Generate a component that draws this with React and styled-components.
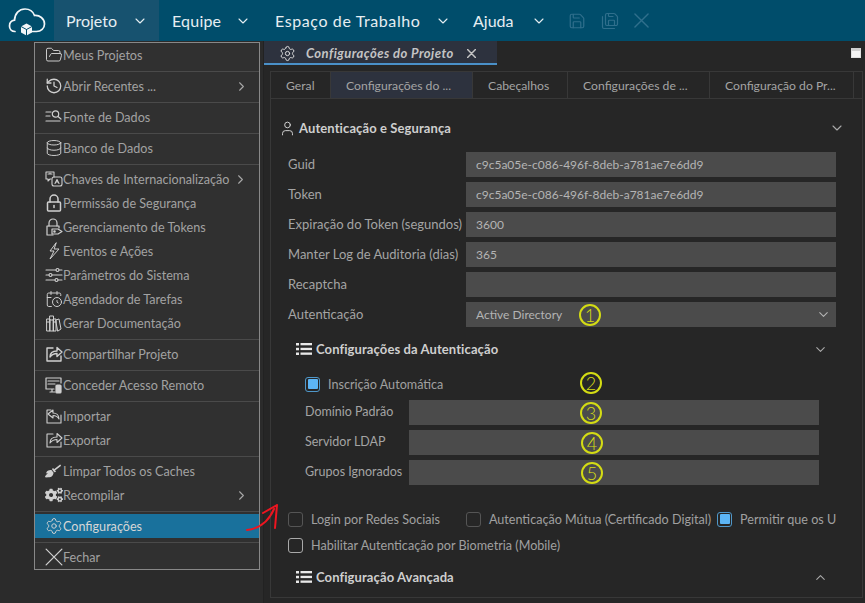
import React from "react";
import styled, { createGlobalStyle } from "styled-components";
import { ChevronDown, ChevronUp, ChevronRight, FolderOpen, History, Database, CalendarClock, Settings, Save, SaveAll, User } from "lucide-react";
import { FaCogs, FaBroom } from "react-icons/fa";

const Global = createGlobalStyle`
  html, body { margin: 0; padding: 0; background: #2b2b2b; }
  body { width: 865px; height: 603px; overflow: hidden; font-family: "Lato", "Noto Sans", sans-serif; color: #a8a8a8; }
  * { box-sizing: border-box; }
`;

const Page = styled.div`position: relative; width: 865px; height: 603px; display: flex; flex-direction: column; overflow: hidden;`;
const TopBar = styled.header`height: 41px; flex: none; background: #004d6b; display: flex; align-items: stretch; color: #e6eef2;`;
const Logo = styled.div`width: 54px; display: flex; align-items: center; justify-content: center;`;
const TopItem = styled.div`
  display: flex; align-items: center; justify-content: space-between; font-size: 16px; white-space: nowrap;
  width: ${p => p.$w}px; padding: 0 ${p => p.$pr}px 0 ${p => p.$pl}px; letter-spacing: ${p => p.$ls || 0}px;
  background: ${p => p.$active ? "#17526f" : "transparent"};
`;
const ToolIcons = styled.div`display: flex; align-items: center; gap: 15px; margin-left: 11px; color: #2f6f8c;`;

const Body = styled.div`flex: 1; display: flex; min-height: 0;`;
const LeftGutter = styled.div`width: 264px; flex: none; background: #2b2b2b; border-right: 1px solid #222;`;
const Main = styled.main`flex: 1; min-width: 0; position: relative; background: #262626; display: flex; flex-direction: column;`;
const DocBar = styled.div`height: 24px; flex: none; display: flex; align-items: stretch;`;
const DocTab = styled.div`
  width: 233px; background: #2d323e; border-bottom: 2px solid #4a90c8; display: flex; align-items: center; padding: 2px 0 0 15px; gap: 10px;
  font-size: 13px; letter-spacing: 0.45px; font-weight: 700; font-style: italic; color: #c4c4c4; white-space: nowrap;
`;
const DocClose = styled.span`margin-left: 3px; display: flex; color: #c4c4c4;`;
const Restore = styled.div`position: absolute; right: 4px; top: 7px; width: 10px; height: 10px; background: #f4f4f4; border: 1px solid #e0e0e0; border-top: 3px solid #cfcfcf;`;
const Panel = styled.section`flex: 1; margin: 6px 2px 5px 6px; border: 1px solid #383838; min-height: 0; display: flex; flex-direction: column; overflow: hidden;`;
const TabRow = styled.nav`height: 27px; flex: none; display: flex; border-bottom: 1px solid #383838; font-size: 12.2px; color: #a4a4a4;`;
const Tab = styled.div`
  width: ${p => p.$w}px; flex: none; display: flex; align-items: center; padding-left: 15px; white-space: nowrap;
  border-right: 1px solid #383838; background: ${p => p.$active ? "#2d323e" : "transparent"};
`;
const Content = styled.div`flex: 1; padding: 0 0 0 17px; display: flex; flex-direction: column; width: 565px;`;
const SectionHead = styled.div`
  height: ${p => p.$h}px; display: flex; align-items: center; gap: ${p => p.$gap || 3}px; font-size: 13px; letter-spacing: 0.1px; font-weight: 700; color: #cfcfcf; flex: none;
  padding: ${p => p.$pt || 0}px 0 0 ${p => p.$pl || 0}px; margin-top: ${p => p.$mt || 0}px;
  margin-left: ${p => p.$ml || 0}px; margin-right: ${p => p.$mr || 0}px;
  & > b { font-weight: 700; flex: 1; white-space: nowrap; }
`;
const FieldRow = styled.div`
  height: 25px; flex: none; display: flex; align-items: center; font-size: ${p => p.$fs || 13}px; color: #a4a4a4; margin-bottom: 5px;
  padding-left: ${p => p.$pl || 0}px; padding-right: ${p => p.$pr || 0}px;
`;
const FieldLabel = styled.label`width: ${p => p.$w}px; flex: none; white-space: nowrap; padding-bottom: 2px;`;
const FieldValue = styled.div`
  flex: 1; height: 25px; background: #4b4b4b; display: flex; align-items: center; justify-content: space-between; padding: 0 5px 0 10px; color: #b4b4b4; font-size: 12px; position: relative; white-space: nowrap;
`;
const Mark = styled.span`
  position: absolute; left: ${p => p.$x}px; top: ${p => p.$top ?? 1.5}px; width: 22px; height: 22px; border: 2px solid #d4dc14; border-radius: 50%; color: #d4dc14; font-size: 18px; line-height: 18px; text-align: center; font-weight: 300;
`;
const CheckRow = styled.div`
  display: flex; align-items: center; font-size: 12.6px; color: #a0a0a0; white-space: nowrap; overflow: ${p => p.$clip ? "hidden" : "visible"}; height: ${p => p.$h}px; flex: none;
  padding: ${p => p.$pt || 0}px 0 0 ${p => p.$pl || 0}px; margin-top: ${p => p.$mt || 0}px; position: relative;
`;
const Box = styled.span`
  width: 15px; height: 15px; flex: none; border-radius: 3px; border: 1.5px solid ${p => p.$on ? "#4f97c9" : p.$bright ? "#a9a9a9" : "#555"}; margin-right: 8px; margin-left: ${p => p.$ml || 0}px; position: relative;
  ${p => p.$on ? "&::after { content: ''; position: absolute; inset: 1.5px; background: #5cb5f5; border-radius: 1px; }" : ""}
`;

const Menu = styled.aside`position: absolute; left: 34px; top: 42px; width: 226px; height: 528px; background: #303030; border: 1px solid #888; display: flex; flex-direction: column; font-size: 12.6px; color: #a2a2a2; z-index: 5;`;
const Group = styled.div`display: flex; flex-direction: column; padding-top: ${p => p.$pt}px; border-bottom: ${p => p.$last ? "none" : "1px solid #4a4a4a"}; flex: none; height: ${p => p.$h}px;`;
const Item = styled.div`
  height: 24px; display: flex; align-items: center; padding: 0 0 ${p => p.$active ? 0 : 2}px 10px; position: relative; white-space: nowrap; flex: none;
  background: ${p => p.$active ? "#19719c" : "transparent"}; color: ${p => p.$active ? "#d6d6d6" : "inherit"};
  & > svg:first-child { color: #d0d0d0; flex: none; }
`;
const Arrow = styled.span`position: absolute; right: ${p => p.$r || 10}px; display: flex; color: #a8a8a8;`;
const RedArrow = styled.svg`position: absolute; left: 246px; top: 503px; z-index: 6;`;

const Glyph = ({ children, sw = 1.1 }) => (
  <svg width="18" height="18" viewBox="0 0 18 18" fill="none" stroke="currentColor" strokeWidth={sw} strokeLinecap="round" strokeLinejoin="round">{children}</svg>
);
const Cross = ({ s = 16, sw = 1.4 }) => (
  <svg width={s} height={s} viewBox="0 0 16 16" fill="none" stroke="currentColor" strokeWidth={sw} strokeLinecap="round"><path d="M1 1L15 15M15 1L1 15" /></svg>
);
const ListGlyph = () => (
  <svg width="16" height="14" viewBox="0 0 16 14" fill="#e8e8e8"><rect x="0" y="1" width="3" height="2.500" /><rect x="0" y="5.800" width="3" height="2.500" /><rect x="0" y="10.500" width="3" height="2.500" /><rect x="4.500" y="1" width="11.500" height="2.300" /><rect x="4.500" y="5.800" width="11.500" height="2.300" /><rect x="4.500" y="10.500" width="11.500" height="2.300" /></svg>
);
const ShareBox = ({ flip, sw = 1.1 }) => (
  <Glyph sw={sw}>
    <path d={flip ? "M6 3H2v13h14V8" : "M8 3H2v13h14v-5"} />
    {flip
      ? <path d="M14 12c0-4-3-6-6-6V3L3 7l5 4V8.500c2.500 0 4.500 1 6 3.500z" />
      : <path d="M5 12c0-4 3-6 7-6V2.500l5 4.500-5 4.500V8.500c-3 0-5 1-7 3.500z" />}
  </Glyph>
);

const I = 18;
const menu = [
  { h: 29, pt: 1, items: [{ t: "Meus Projetos", i: <FolderOpen size={I} strokeWidth={1.3} /> }] },
  { h: 31, pt: 3, items: [{ t: "Abrir Recentes ...", i: <History size={I} strokeWidth={1.7} />, more: true }] },
  { h: 31, pt: 3, items: [{ t: "Fonte de Dados", i: <Glyph sw={1.2}><path d="M1 4h5M1 8h4M1 13h14" /><circle cx="10.500" cy="6" r="3.200" /><path d="M13 8.500l3 2.500" /></Glyph> }] },
  { h: 31, pt: 3, items: [{ t: "Banco de Dados", i: <Database size={I} strokeWidth={1.3} /> }] },
  { h: 175, pt: 3, items: [
    { t: "Chaves de Internacionalização", i: <Glyph><path d="M9 7V2H1v7h2v2l2-2h1" /><rect x="7" y="7" width="10" height="9" rx="2" /><path d="M10 13.500l2-4 2 4M10.800 12h2.400M3 4h4M5 3v1" /></Glyph>, more: true, r: 11 },
    { t: "Permissão de Segurança", i: <Glyph sw={1.5}><rect x="2.500" y="8" width="13" height="9" rx="1" /><path d="M5 8V5a4 4 0 0 1 8 0v3" /><path d="M9 11.500v2" /></Glyph> },
    { t: "Gerenciamento de Tokens", i: <Glyph sw={1.2}><path d="M4 8V5a4 4 0 0 1 8 0v3" /><path d="M8 17H2V8h12v2" /><path d="M7 11h6l4 2.500-4 2.500H7z" /><circle cx="9.500" cy="13.500" r="0.700" /></Glyph> },
    { t: "Eventos e Ações", i: <Glyph sw={1}><path d="M11 1L5 9h4l-4 8 9-10H9.500z" /></Glyph> },
    { t: "Parâmetros do Sistema", i: <Glyph sw={1.1}><path d="M1 4h10M14 4h3M1 9h3M7 9h10M1 14h9M13 14h4" /><circle cx="12.500" cy="4" r="1.500" /><circle cx="5.500" cy="9" r="1.500" /><circle cx="11.500" cy="14" r="1.500" /></Glyph> },
    { t: "Agendador de Tarefas", i: <CalendarClock size={I} strokeWidth={1.3} /> },
    { t: "Gerar Documentação", i: <Glyph sw={1}><path d="M2 5h3v12H2zM5 2h3.500v15H5zM8.500 5H11v12H8.500zM2 8h3M5 6h3.500M8.500 8H11M11 6l3-1 2 10-3 2z" /></Glyph> },
  ] },
  { h: 31, pt: 3, items: [{ t: "Compartilhar Projeto", i: <ShareBox sw={1.4} /> }] },
  { h: 31, pt: 3, items: [{ t: "Conceder Acesso Remoto", i: <Glyph sw={1.2}><path d="M9 13H1V2h15v5M5 16h5M7 13v3M3 5h11M3 8h7" /><rect x="11" y="9" width="5" height="8" rx="1" fill="currentColor" /></Glyph> }] },
  { h: 55, pt: 3, items: [
    { t: "Importar", i: <ShareBox flip /> },
    { t: "Exportar", i: <ShareBox /> },
  ] },
  { h: 55, pt: 3, items: [
    { t: "Limpar Todos os Caches", i: <FaBroom size={16} style={{ marginRight: 2 }} /> },
    { t: "Recompilar", i: <FaCogs size={18} />, more: true },
  ] },
  { h: 31, pt: 2, items: [{ t: "Configurações", i: <Settings size={I} strokeWidth={1.3} />, active: true }] },
  { h: 26, pt: 3, last: true, items: [{ t: "Fechar", i: <Cross s={18} sw={1.1} /> }] },
];

const CloudLogo = () => (
  <svg width="38" height="30" viewBox="0 0 38 30" fill="none" stroke="#f2f6f8" strokeWidth="1.7" strokeLinecap="round">
    <path d="M7 25.500C3.500 25.500 1.500 23 1.500 20C1.500 17 3.500 14.700 6.500 14.200C6.800 7.500 11 3 17 3C21.500 3 25 5.500 26.500 9.500C31.500 9 36.500 12.500 36.500 18C36.500 22.500 33 25.500 28.500 25.500H24" />
    <path d="M18.500 17.500l5.500 3v6l-5.500 3-5.500-3v-6z" fill="#f2f6f8" stroke="none" />
    <path d="M13 20.500l5.500 3 5.500-3M18.500 23.500v6" stroke="#004d6b" strokeWidth="1" />
  </svg>
);

const Chev = () => <ChevronDown size={16} strokeWidth={1.6} />;

export default function App() {
  return (
    <Page>
      <Global />
      <TopBar>
        <Logo><CloudLogo /></Logo>
        <TopItem $active $pl={12} $pr={11} $w={105}>Projeto <Chev /></TopItem>
        <TopItem $pl={13} $pr={12} $w={104} $ls={0.2}>Equipe <Chev /></TopItem>
        <TopItem $pl={12} $pr={10} $w={198} $ls={0.6}>Espaço de Trabalho <Chev /></TopItem>
        <TopItem $pl={12} $pr={10} $w={96}>Ajuda <Chev /></TopItem>
        <ToolIcons>
          <Save size={18} strokeWidth={1.6} />
          <SaveAll size={18} strokeWidth={1.6} />
          <Cross s={15} sw={1.5} />
        </ToolIcons>
      </TopBar>
      <Body>
        <LeftGutter />
        <Main>
          <DocBar>
            <DocTab>
              <Settings size={17} strokeWidth={1.4} color="#ddd" />
              Configurações do Projeto
              <DocClose><Cross s={9} sw={2.6} /></DocClose>
            </DocTab>
          </DocBar>
          <Restore />
          <Panel>
            <TabRow>
              <Tab $w={60}>Geral</Tab>
              <Tab $w={142} $active>Configurações do ...</Tab>
              <Tab $w={95}>Cabeçalhos</Tab>
              <Tab $w={142}>Configurações de ...</Tab>
              <Tab $w={144}>Configuração do Pr...</Tab>
            </TabRow>
            <Content>
              <SectionHead $h={53} $pt={5} $ml={-9} $mr={-9}>
                <User size={17} strokeWidth={1.3} color="#ddd" />
                <b>Autenticação e Segurança</b>
                <ChevronDown size={16} strokeWidth={1.7} color="#aaa" />
              </SectionHead>
              <FieldRow><FieldLabel $w={178}>Guid</FieldLabel><FieldValue>c9c5a05e-c086-496f-8deb-a781ae7e6dd9</FieldValue></FieldRow>
              <FieldRow><FieldLabel $w={178}>Token</FieldLabel><FieldValue>c9c5a05e-c086-496f-8deb-a781ae7e6dd9</FieldValue></FieldRow>
              <FieldRow><FieldLabel $w={178}>Expiração do Token (segundos)</FieldLabel><FieldValue>3600</FieldValue></FieldRow>
              <FieldRow><FieldLabel $w={178}>Manter Log de Auditoria (dias)</FieldLabel><FieldValue>365</FieldValue></FieldRow>
              <FieldRow><FieldLabel $w={178}>Recaptcha</FieldLabel><FieldValue /></FieldRow>
              <FieldRow>
                <FieldLabel $w={178}>Autenticação</FieldLabel>
                <FieldValue>Active Directory<Mark $x={113}>1</Mark><ChevronDown size={15} strokeWidth={1.7} /></FieldValue>
              </FieldRow>
              <SectionHead $h={34} $pl={8} $gap={4}>
                <ListGlyph />
                <b>Configurações da Autenticação</b>
                <ChevronDown size={15} strokeWidth={1.7} color="#aaa" style={{ marginRight: 8 }} />
              </SectionHead>
              <CheckRow $h={34} $pt={2} $pl={17}>
                <Box $on />Inscrição Automática
                <Mark $x={292} $top={6}>2</Mark>
              </CheckRow>
              <FieldRow $pl={17} $pr={17} $fs={12.5}><FieldLabel $w={104}>Domínio Padrão</FieldLabel><FieldValue><Mark $x={171}>3</Mark></FieldValue></FieldRow>
              <FieldRow $pl={17} $pr={17} $fs={12.5}><FieldLabel $w={104}>Servidor LDAP</FieldLabel><FieldValue><Mark $x={172}>4</Mark></FieldValue></FieldRow>
              <FieldRow $pl={17} $pr={17} $fs={12.5}><FieldLabel $w={104}>Grupos Ignorados</FieldLabel><FieldValue><Mark $x={172}>5</Mark></FieldValue></FieldRow>
              <CheckRow $h={30} $mt={14} $clip>
                <Box />Login por Redes Sociais
                <Box $ml={26} />Autenticação Mútua (Certificado Digital)
                <Box $on $ml={6} />Permitir que os Us
              </CheckRow>
              <CheckRow $h={22}><Box $bright />Habilitar Autenticação por Biometria (Mobile)</CheckRow>
              <SectionHead $h={40} $mt={1} $pl={8} $gap={4}>
                <ListGlyph />
                <b>Configuração Avançada</b>
                <ChevronUp size={15} strokeWidth={1.7} color="#aaa" style={{ marginRight: 8 }} />
              </SectionHead>
            </Content>
          </Panel>
        </Main>
      </Body>
      <Menu>
        {menu.map((g, i) => (
          <Group key={i} $h={g.h} $pt={g.pt} $last={g.last}>
            {g.items.map(it => (
              <Item key={it.t} $active={it.active}>
                {it.i}{it.t}
                {it.more && <Arrow $r={it.r}><ChevronRight size={15} strokeWidth={1.7} /></Arrow>}
              </Item>
            ))}
          </Group>
        ))}
      </Menu>
      <RedArrow width="32" height="30" viewBox="0 0 32 30" fill="none" stroke="#ee1520" strokeLinecap="round">
        <path d="M1 27C11 26 22 20 28 6" strokeWidth="2" />
        <path d="M17 10L31 2M31 2L29 25" strokeWidth="2" />
      </RedArrow>
    </Page>
  );
}
